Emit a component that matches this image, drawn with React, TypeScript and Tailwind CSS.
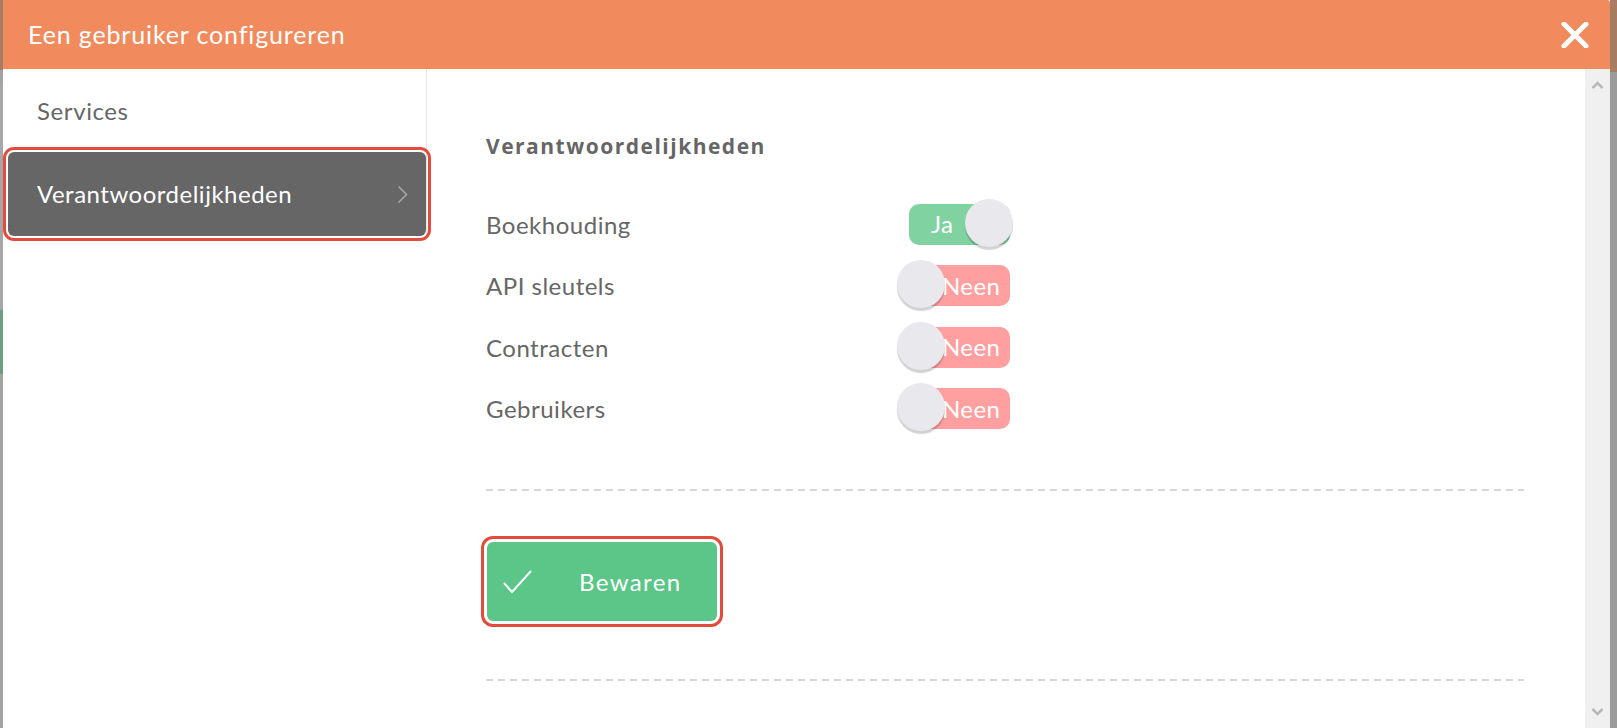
import React from 'react';

const font = { fontFamily: 'Lato, "Open Sans", sans-serif' };

function Toggle({ on }: { on: boolean }) {
    return (
        <div className="relative w-[116px] h-[50px]">
            <div
                className={`absolute left-[12px] right-[3px] top-[4px] h-[41px] rounded-[10px] flex items-center text-white text-[24px] tracking-[0.4px] ${on ? 'bg-[#80d3a1] pl-[22px]' : 'bg-[#ff9f9f] pl-[33px]'}`}
            >
                {on ? 'Ja' : 'Neen'}
            </div>
            <div
                className={`absolute w-[48px] h-[48px] rounded-full bg-[#e8e8ed] shadow-[0_3px_1px_rgba(0,0,0,0.18)] ${on ? 'right-0 top-[-1px] w-[46px] h-[46px]' : 'left-0 top-[-1px]'}`}
            />
        </div>
    );
}

function Row({ label, on }: { label: string; on: boolean }) {
    return (
        <div className="flex items-center h-[61.5px]">
            <span className="w-[411px] text-[24px] tracking-[0.5px] text-[#666666]">{label}</span>
            <Toggle on={on} />
        </div>
    );
}

function Dashed() {
    return (
        <div className="h-[2px] w-[1038px] bg-[repeating-linear-gradient(to_right,#d6d6d6_0,#d6d6d6_7px,transparent_7px,transparent_12px)]" />
    );
}

export default function App() {
    return (
        <div className="flex w-full h-[728px] overflow-hidden bg-[#9e9e9e]" style={font}>

            {/* page behind the modal, left edge */}
            <div className="w-[3px] flex flex-col">
                <div className="h-[70px] bg-[#a87b63]" />
                <div className="h-[12px] bg-[#a3a3a3]" />
                <div className="h-[228px] bg-[#a6a6a6]" />
                <div className="h-[64px] bg-[#6e9f7c]" />
                <div className="flex-1 bg-[#a3a3a3]" />
            </div>

            {/* modal */}
            <div className="w-[1607px] flex flex-col bg-white">
                <div className="h-[69px] bg-[#f18b5e] flex items-center justify-between pl-[25px] pr-[21px] rounded-tr-[3px]">
                    <h1 className="text-[25px] tracking-[0.85px] text-white">Een gebruiker configureren</h1>
                    <svg width="28" height="26" viewBox="0 0 28 26">
                        <path d="M3 2 L25 24 M25 2 L3 24" stroke="white" strokeWidth="5" strokeLinecap="round" />
                    </svg>
                </div>

                <div className="flex flex-1 min-h-0">
                    {/* sidebar */}
                    <div className="w-[424px]">
                        <div className="border-r border-[#e6e6e6]">
                            <div className="h-[83px] flex items-center pl-[34px] text-[24px] tracking-[0.6px] text-[#666666]">Services</div>
                            <div className="h-[84px] ml-[5px] pl-[29px] pr-[18px] flex items-center justify-between bg-[#666666] text-white text-[24px] tracking-[0.5px] rounded-md outline-3 outline-[#e24c3c] outline-offset-[2px]">
                                <span>Verantwoordelijkheden</span>
                                <svg width="11" height="19" viewBox="0 0 11 19">
                                    <path d="M1.5 1.5 L9.5 9.5 L1.5 17.5" fill="none" stroke="#a8a8a8" strokeWidth="1.5" />
                                </svg>
                            </div>
                        </div>
                    </div>

                    {/* content */}
                    <div className="flex-1 pl-[59px] pt-[65px]">
                        <h2
                            className="text-[21px] leading-[24px] font-bold tracking-[1.5px] text-[#666666]"
                            style={{ fontFamily: '"Open Sans", Lato, sans-serif' }}
                        >
                            Verantwoordelijkheden
                        </h2>
                        <div className="mt-[36px] flex flex-col">
                            <Row label="Boekhouding" on />
                            <Row label="API sleutels" on={false} />
                            <Row label="Contracten" on={false} />
                            <Row label="Gebruikers" on={false} />
                        </div>

                        <div className="mt-[49px]">
                            <Dashed />
                        </div>

                        <div className="mt-[51px] ml-[1px]">
                            <button className="w-[230px] h-[79px] rounded-md bg-[#5bc687] text-white text-[24px] tracking-[1.4px] flex items-center pl-[15px] outline-3 outline-[#e24c3c] outline-offset-[3px]">
                                <svg width="31" height="26" viewBox="0 0 31 26">
                                    <path d="M2 14 L10 23 L29 2" fill="none" stroke="white" strokeWidth="2" />
                                </svg>
                                <span className="ml-[46px]">Bewaren</span>
                            </button>
                        </div>

                        <div className="mt-[58px]">
                            <Dashed />
                        </div>
                    </div>

                    {/* scrollbar */}
                    <div className="w-[25px] bg-[#f0f0f0] flex flex-col justify-between items-center py-[12px]">
                        <svg width="13" height="8" viewBox="0 0 13 8">
                            <path d="M1.5 7 L6.5 2 L11.5 7" fill="none" stroke="#b8b8b8" strokeWidth="2.5" />
                        </svg>
                        <svg width="13" height="8" viewBox="0 0 13 8">
                            <path d="M1.5 1 L6.5 6 L11.5 1" fill="none" stroke="#b8b8b8" strokeWidth="2.5" />
                        </svg>
                    </div>
                </div>
            </div>

            {/* page behind the modal, right edge */}
            <div className="flex-1 flex flex-col">
                <div className="h-[72px] bg-[#a87b63]" />
                <div className="flex-1 bg-[#9b9b9b]" />
            </div>
        </div>
    );
}
